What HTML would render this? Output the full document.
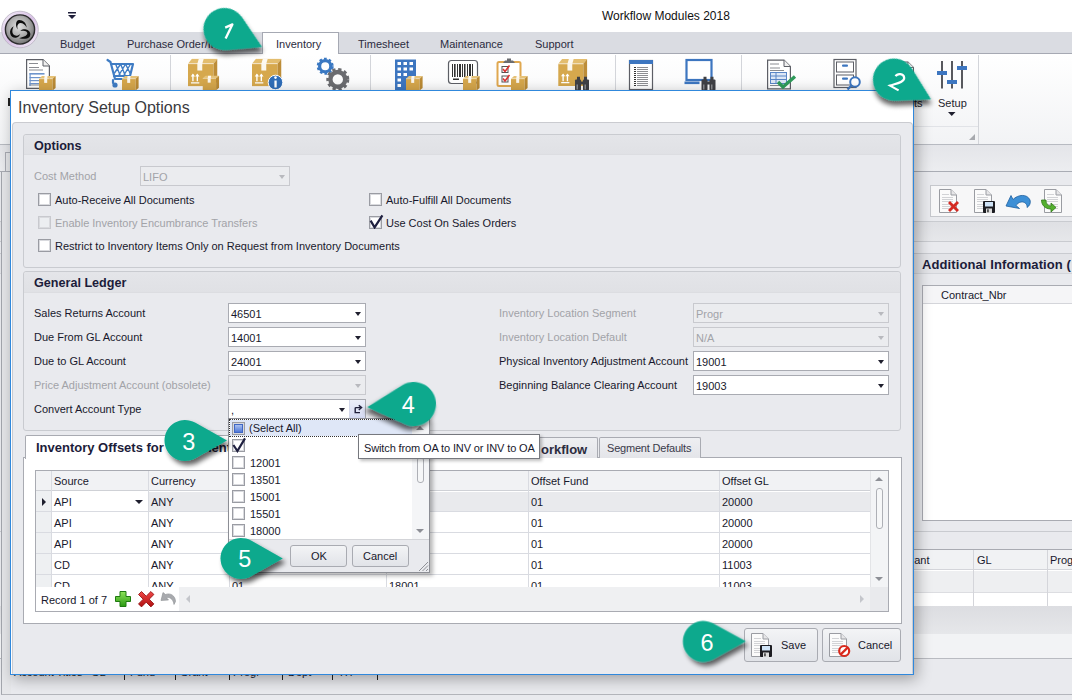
<!DOCTYPE html>
<html><head><meta charset="utf-8">
<style>
*{box-sizing:border-box;margin:0;padding:0}
html,body{width:1072px;height:700px;overflow:hidden;background:#e9eaee;font-family:"Liberation Sans",sans-serif;font-size:11px;color:#18182c}
.a{position:absolute}
.t{position:absolute;white-space:nowrap;line-height:1}
.dis{color:#a2a3a8}
.combo{position:absolute;height:20px;background:#fff;border:1px solid #a9abb2}
.combo .v{position:absolute;left:2px;top:4px;white-space:nowrap}
.combo .ar{position:absolute;right:4px;top:8px;width:0;height:0;border-left:3.5px solid transparent;border-right:3.5px solid transparent;border-top:4px solid #1f1f2e}
.combo.d{background:#ebecef;border-color:#c8c9ce}
.combo.d .v{color:#a2a3a8}
.combo.d .ar{border-top-color:#b8b9be}
.cb{position:absolute;width:13px;height:13px;border:1px solid #9a9ca3;background:#fff;box-shadow:inset 0 0 0 1px #d9dade}
.cb.d{border-color:#c8c9ce;background:#eceef1}
.grp{position:absolute;border:1px solid #c9cbd0;border-radius:3px;background:#e9eaee}
.grp .hd{position:absolute;left:0;right:0;top:0;height:20px;background:linear-gradient(#e4e5e9,#e0e1e5);border-bottom:1px solid #dcdde1;border-radius:3px 3px 0 0}
.grp .hd span{position:absolute;left:10px;top:4px;font-weight:bold;font-size:12.6px;color:#1c1c3a}
.btn{position:absolute;border:1px solid #a9abb2;border-radius:3px;background:linear-gradient(#f3f4f6,#e1e3e8)}
.g td{border-right:1px solid #d9dadd;border-bottom:1px solid #d9dadd}
</style></head><body>

<!-- ===== title bar ===== -->
<div class="a" style="left:0;top:0;width:1072px;height:32px;background:#fff"></div>
<div class="t" style="left:602px;top:10px;font-size:12px;color:#111">Workflow Modules 2018</div>

<!-- ===== tabs ===== -->
<div class="a" style="left:0;top:32px;width:1072px;height:22px;background:#dadce2;border-bottom:1px solid #a6a9b3"></div>
<div class="a" style="left:262px;top:32px;width:77px;height:23px;background:#fff;border:1px solid #a6a9b3;border-bottom:none"></div>
<div class="t" style="left:60px;top:39px;color:#2b2b40">Budget</div>
<div class="t" style="left:127px;top:39px;color:#2b2b40">Purchase Order/Inv</div>
<div class="t" style="left:276px;top:39px;color:#2b2b40">Inventory</div>
<div class="t" style="left:358px;top:39px;color:#2b2b40">Timesheet</div>
<div class="t" style="left:440px;top:39px;color:#2b2b40">Maintenance</div>
<div class="t" style="left:535px;top:39px;color:#2b2b40">Support</div>

<!-- ===== ribbon ===== -->
<div class="a" style="left:0;top:54px;width:1072px;height:91px;background:linear-gradient(#ffffff,#f2f3f5);border-bottom:1px solid #b7bac1"></div>



<!-- right app panel -->
<div class="a" style="left:0;top:145px;width:1072px;height:27px;background:linear-gradient(#e4e5e9,#ecedf0);border-bottom:1px solid #a9acb4"></div>
<div class="a" style="left:930px;top:185px;width:150px;height:32px;background:#f7f7f8;border:1px solid #c6c8cd"></div>
<div class="a" style="left:0;top:221px;width:1072px;height:21px;background:linear-gradient(#dfe0e4,#e6e7ea);border-top:1px solid #c9cbd0;border-bottom:1px solid #c9cbd0"></div>
<div class="a" style="left:0;top:253px;width:1072px;height:21px;background:#e3e4e8;border-top:1px solid #c9cbd0;border-bottom:1px solid #d3d5da"></div>
<div class="t" style="left:922px;top:258px;font-weight:bold;font-size:13px;letter-spacing:.1px;color:#1c1c3a">Additional Information (</div>
<div class="a" style="left:922px;top:285px;width:160px;height:236px;background:#fff;border:1px solid #a9abb2"></div>
<div class="a" style="left:923px;top:286px;width:160px;height:18px;background:#f5f5f7;border-bottom:1px solid #d4d5da"></div>
<div class="t" style="left:941px;top:290px">Contract_Nbr</div>
<div class="a" style="left:0;top:531px;width:1072px;height:1px;background:#c9cbd0"></div>
<div class="a" style="left:912px;top:549px;width:170px;height:58px;background:#fff;border-top:1px solid #a9abb2;border-bottom:1px solid #cfd1d6"></div>
<div class="a" style="left:912px;top:550px;width:170px;height:20px;background:#f1f2f4;border-bottom:1px solid #d4d5da"></div>
<div class="a" style="left:912px;top:571px;width:170px;height:22px;background:#eeeff1;border-bottom:1px solid #dcdde1"></div>
<div class="a" style="left:973px;top:550px;width:1px;height:56px;background:#d4d5da"></div>
<div class="a" style="left:1047px;top:550px;width:1px;height:56px;background:#d4d5da"></div>
<div class="t" style="left:902px;top:555px">Grant</div>
<div class="t" style="left:977px;top:555px">GL</div>
<div class="t" style="left:1050px;top:555px">Progr</div>
<div class="a" style="left:0;top:606px;width:1072px;height:28px;background:linear-gradient(#dcdde1,#e6e7ea)"></div>
<div class="a" style="left:0;top:634px;width:1072px;height:25px;background:#f2f3f5;border-bottom:1px solid #b9bbc1"></div>
<div class="a" style="left:1px;top:694px;width:1072px;height:1px;background:#b3b5bb"></div>
<div class="t" style="left:14px;top:667px;color:#222">Account Titles</div><div class="t" style="left:91px;top:667px;color:#222">GL</div>
<div class="a" style="left:124px;top:666px;width:1px;height:14px;background:#222"></div><div class="t" style="left:130px;top:667px">Fund</div>
<div class="a" style="left:175px;top:666px;width:1px;height:14px;background:#222"></div><div class="t" style="left:180px;top:667px">Grant</div>
<div class="a" style="left:229px;top:666px;width:1px;height:14px;background:#222"></div><div class="t" style="left:233px;top:667px">Progr</div>
<div class="a" style="left:282px;top:666px;width:1px;height:14px;background:#222"></div><div class="t" style="left:288px;top:667px">Dept</div>
<div class="a" style="left:332px;top:666px;width:1px;height:14px;background:#222"></div><div class="t" style="left:338px;top:667px">TIT</div>
<div class="a" style="left:377px;top:666px;width:1px;height:14px;background:#222"></div>
<div class="a" style="left:5px;top:152px;width:6px;height:20px;background:#e6e7ea;border:1px solid #a9acb4;border-right:none"></div>
<div class="a" style="left:1px;top:172px;width:10px;height:523px;background:#e6e7ea;border-left:1px solid #a3a6ad;border-bottom:1px solid #b3b5bb"></div>

<!-- ribbon content -->
<svg class="a" style="left:0;top:0" width="1072" height="150" viewBox="0 0 1072 150">
<defs>
<symbol id="box" viewBox="0 0 17 15">
  <polygon points="0,3.2 3,0.4 16.6,0.4 13.6,3.2" fill="#e6c277"/>
  <rect x="0" y="3.2" width="13.6" height="11.8" fill="#d5a64b"/>
  <polygon points="13.6,3.2 16.6,0.4 16.6,12.4 13.6,15" fill="#bb8b35"/>
  <polygon points="5.6,0.4 8.6,0.4 8.2,3.2 5.2,3.2" fill="#fff" opacity=".9"/>
  <rect x="5.2" y="3.2" width="3" height="4.2" fill="#fff" opacity=".9"/>
  <line x1="0" y1="3.2" x2="13.6" y2="3.2" stroke="#fff" stroke-width=".6" opacity=".7"/>
</symbol>
<symbol id="bigbox" viewBox="0 0 30 28">
  <polygon points="0,5 4,0 30,0 26,5" fill="#e3bd6e"/>
  <rect x="0" y="5" width="26" height="23" fill="#d6a84d"/>
  <polygon points="26,5 30,0 30,23 26,28" fill="#bd8d38"/>
  <polygon points="11,0 16,0 14.5,5 9.5,5" fill="#fff" opacity=".9"/>
  <rect x="9.5" y="5" width="5" height="7" fill="#fff" opacity=".9"/>
  <line x1="0" y1="5" x2="26" y2="5" stroke="#fff" stroke-width=".8" opacity=".8"/>
  <g stroke="#fff" stroke-width="1.4" fill="none"><line x1="5" y1="16" x2="5" y2="23"/><line x1="9.5" y1="16" x2="9.5" y2="23"/><line x1="3" y1="24.5" x2="11.5" y2="24.5"/></g>
  <g fill="#fff"><polygon points="2.8,18 5,15 7.2,18"/><polygon points="7.3,18 9.5,15 11.7,18"/></g>
</symbol>
<symbol id="doc" viewBox="0 0 24 30">
  <path d="M0.6,0.6 H17 L23.4,7 V29.4 H0.6 Z" fill="#fff" stroke="#5d5f66" stroke-width="1.2"/>
  <path d="M17,0.6 V7 H23.4" fill="#f0f0f0" stroke="#5d5f66" stroke-width="1"/>
  <g stroke="#8a8c92" stroke-width="1"><line x1="3" y1="4.5" x2="12" y2="4.5"/><line x1="3" y1="8.5" x2="13" y2="8.5"/><line x1="3" y1="11" x2="17" y2="11"/><line x1="3" y1="26" x2="17" y2="26"/></g>
</symbol>
<symbol id="binoc" viewBox="0 0 16 14">
  <g fill="#3f4045"><rect x="3" y="0" width="3" height="4"/><rect x="10" y="0" width="3" height="4"/><rect x="1" y="3" width="6" height="11" rx="1"/><rect x="9" y="3" width="6" height="11" rx="1"/><rect x="6" y="5" width="4" height="3"/></g>
  <g fill="#8a8b90"><rect x="2.5" y="8" width="1.5" height="5"/><rect x="10.5" y="8" width="1.5" height="5"/></g>
</symbol>
</defs>
<!-- separators -->
<g fill="#d3d5da"><rect x="170" y="55" width="1" height="89"/><rect x="370" y="55" width="1" height="89"/><rect x="615" y="55" width="1" height="89"/><rect x="741" y="55" width="1" height="89"/><rect x="978" y="55" width="1" height="89"/></g>
<rect x="913" y="126" width="65" height="1" fill="#e1e3e7"/>
<polygon points="969,140 975,140 975,134" fill="#a7a9ae"/>
<!-- icon 1 doc+box -->
<use href="#doc" x="26" y="59" width="24" height="30"/>
<g fill="#6f95cc"><rect x="29.5" y="73" width="15" height="1.6"/><rect x="29.5" y="77" width="13" height="1.2"/><rect x="29.5" y="80" width="13" height="1.2"/><rect x="29.5" y="83" width="13" height="1.2"/><rect x="29.5" y="73" width="1.2" height="13"/></g>
<use href="#box" x="39" y="75.5" width="17" height="15"/>
<!-- icon 2 cart -->
<g fill="none" stroke="#3f7cc4" stroke-width="2.2" stroke-linecap="round" stroke-linejoin="round">
  <path d="M107.5,60 L110.5,62 L115,79 L129,79"/>
  <path d="M111,64 L133,64 L130,76 L114,76"/>
  <path d="M116,65 L120,75 M121,65 L125,75 M126,65 L130,73 M130,65 L124,75 M125,65 L119,75 M120,65 L114.5,73" stroke-width="1.4"/>
  <path d="M113,80 L113,83"/>
</g>
<circle cx="115" cy="85" r="2.6" fill="#3f7cc4"/>
<use href="#box" x="122" y="75.5" width="17" height="15"/>
<!-- icon 3 boxes -->
<use href="#bigbox" x="188" y="58.5" width="29.5" height="28"/>
<use href="#box" x="202.5" y="75" width="17" height="15.5"/>
<!-- icon 4 box info -->
<use href="#bigbox" x="252" y="58.5" width="29.5" height="28"/>
<circle cx="275.5" cy="82.5" r="7.3" fill="#2f6db8" stroke="#fff" stroke-width="1"/>
<rect x="274.4" y="80.5" width="2.3" height="7" fill="#fff"/><circle cx="275.5" cy="77.6" r="1.3" fill="#fff"/>
<!-- icon 5 gears -->
<g>
  <circle cx="325.2" cy="66.2" r="5.6" fill="none" stroke="#3a78c2" stroke-width="3.2"/>
  <circle cx="325.2" cy="66.2" r="7.2" fill="none" stroke="#3a78c2" stroke-width="2.6" stroke-dasharray="2.6 2.05"/>
  <circle cx="337.8" cy="79.4" r="7.4" fill="none" stroke="#6b6c70" stroke-width="4.4"/>
  <circle cx="337.8" cy="79.4" r="10" fill="none" stroke="#6b6c70" stroke-width="3" stroke-dasharray="3.2 2.7"/>
</g>
<!-- icon 6 building -->
<rect x="395" y="59.5" width="21" height="31" fill="#3d76c0"/>
<g fill="#fff"><rect x="397.5" y="62" width="3.5" height="3"/><rect x="403.5" y="62" width="3.5" height="3"/><rect x="409.5" y="62" width="3.5" height="3"/><rect x="397.5" y="67.5" width="3.5" height="3"/><rect x="403.5" y="67.5" width="3.5" height="3"/><rect x="409.5" y="67.5" width="3.5" height="3"/><rect x="397.5" y="73" width="3.5" height="3"/><rect x="403.5" y="73" width="3.5" height="3"/><rect x="397.5" y="78.5" width="3.5" height="3"/><rect x="397.5" y="84" width="3.5" height="3"/></g>
<use href="#box" x="406" y="75.5" width="17" height="15"/>
<!-- icon 7 barcode -->
<rect x="448.5" y="60.5" width="29" height="23" rx="3" fill="#fff" stroke="#5d5f66" stroke-width="1.2"/>
<g fill="#333"><rect x="452" y="64" width="1" height="13"/><rect x="454" y="64" width="1.6" height="13"/><rect x="457" y="64" width="1" height="13"/><rect x="459" y="64" width="2" height="13"/><rect x="462" y="64" width="1" height="13"/><rect x="464" y="64" width="1.5" height="13"/><rect x="467" y="64" width="1" height="13"/><rect x="469" y="64" width="2" height="13"/><rect x="472" y="64" width="1" height="13"/><rect x="453" y="78.5" width="6" height="1.5"/></g>
<use href="#box" x="463" y="75.5" width="17" height="15"/>
<!-- icon 8 clipboard -->
<rect x="497.5" y="62" width="23" height="24" rx="1.5" fill="#fff" stroke="#e0a850" stroke-width="2"/>
<path d="M503,63 L505,60.5 L513,60.5 L515,63 Z" fill="#6b6c70"/><rect x="507" y="58.5" width="4" height="3" fill="#6b6c70"/>
<rect x="502" y="66.5" width="6" height="6" fill="#fff" stroke="#555" stroke-width="1"/><path d="M503,69 L505,71.5 L509.5,65.5" fill="none" stroke="#d33" stroke-width="1.6"/>
<rect x="502" y="76" width="6" height="6" fill="#fff" stroke="#555" stroke-width="1"/><path d="M503,78.5 L505,81 L509.5,75" fill="none" stroke="#d33" stroke-width="1.6"/>
<use href="#box" x="511" y="75.5" width="17" height="15"/>
<!-- icon 9 box binoculars -->
<use href="#bigbox" x="558" y="59" width="29.5" height="27"/>
<use href="#binoc" x="574" y="76.5" width="16" height="14"/>
<!-- icon 10 list doc -->
<rect x="629.5" y="60.5" width="23" height="29" fill="#fff" stroke="#5d5f66" stroke-width="1.2"/>
<rect x="629" y="60" width="24" height="4" fill="#3d76c0"/>
<g><rect x="634" y="67" width="2" height="1" fill="#333"/><rect x="637" y="67" width="11" height="1" fill="#8d8e92"/><rect x="634" y="69" width="2" height="1" fill="#333"/><rect x="637" y="69" width="11" height="1" fill="#8d8e92"/><rect x="634" y="71" width="2" height="1" fill="#333"/><rect x="637" y="71" width="11" height="1" fill="#8d8e92"/><rect x="634" y="73" width="2" height="1" fill="#333"/><rect x="637" y="73" width="11" height="1" fill="#8d8e92"/><rect x="634" y="75" width="2" height="1" fill="#333"/><rect x="637" y="75" width="11" height="1" fill="#8d8e92"/><rect x="634" y="77" width="2" height="1" fill="#333"/><rect x="637" y="77" width="11" height="1" fill="#8d8e92"/><rect x="634" y="79" width="2" height="1" fill="#333"/><rect x="637" y="79" width="11" height="1" fill="#8d8e92"/><rect x="634" y="81" width="2" height="1" fill="#333"/><rect x="637" y="81" width="11" height="1" fill="#8d8e92"/><rect x="634" y="83" width="2" height="1" fill="#333"/><rect x="637" y="83" width="11" height="1" fill="#8d8e92"/><rect x="634" y="85" width="2" height="1" fill="#333"/><rect x="637" y="85" width="11" height="1" fill="#8d8e92"/></g>
<!-- icon 11 monitor -->
<rect x="686.5" y="60" width="25" height="20" fill="#fff" stroke="#3d76c0" stroke-width="2.2"/>
<rect x="684.5" y="81.5" width="15" height="2.6" fill="#3d76c0"/>
<use href="#binoc" x="700.5" y="76.5" width="16" height="14"/>
<!-- icon 12 doc check -->
<use href="#doc" x="767" y="59" width="24" height="31"/>
<g fill="none" stroke="#5b86c6" stroke-width="1"><rect x="770.5" y="72.5" width="16" height="11" fill="#dde7f5"/><line x1="770.5" y1="76" x2="786.5" y2="76"/><line x1="770.5" y1="79.5" x2="786.5" y2="79.5"/><line x1="776" y1="72.5" x2="776" y2="83.5"/></g>
<path d="M778,82 L783,87 L795,76.5" fill="none" stroke="#2e9a5a" stroke-width="3.4"/>
<!-- icon 13 cabinet -->
<rect x="834" y="59.5" width="22" height="28" fill="#fff" stroke="#5d5f66" stroke-width="1.2"/>
<rect x="836.5" y="62" width="17" height="10" fill="#fff" stroke="#5d5f66" stroke-width="1"/>
<rect x="836.5" y="75" width="17" height="10" fill="#fff" stroke="#5d5f66" stroke-width="1"/>
<rect x="842" y="64.5" width="6" height="2.2" rx="1" fill="#3d76c0"/><rect x="842" y="77.5" width="6" height="2.2" rx="1" fill="#3d76c0"/>
<circle cx="855" cy="82" r="4.8" fill="#fff" stroke="#3d76c0" stroke-width="2"/><line x1="851.5" y1="85.5" x2="847.5" y2="89.5" stroke="#3d76c0" stroke-width="2.4"/>
<!-- icon 14 doc partly hidden -->
<use href="#doc" x="893" y="59" width="21" height="31"/>
<!-- icon 15 setup -->
<g fill="#58595e"><rect x="941" y="61" width="2" height="27.5"/><rect x="951" y="61" width="2" height="27.5"/><rect x="961" y="61" width="2" height="27.5"/></g>
<g fill="#3d76c0"><rect x="937" y="71" width="10" height="4"/><rect x="947" y="80" width="10" height="4"/><rect x="957" y="66" width="10" height="4"/></g>
<polygon points="948,112 955.5,112 951.75,116" fill="#1f1f2e"/>
</svg>
<div class="t" style="left:938px;top:98px;font-size:11px;color:#1f1f2e">Setup</div>
<div class="t" style="left:884px;top:98px;font-size:11px;color:#1f1f2e">Reports</div>
<!-- logo -->
<svg class="a" style="left:0;top:9px" width="42" height="42" viewBox="0 0 42 42">
<defs><radialGradient id="lg" cx="45%" cy="40%" r="65%"><stop offset="0" stop-color="#e2e2e2"/><stop offset=".55" stop-color="#a9a9a9"/><stop offset="1" stop-color="#6a6a6a"/></radialGradient>
<linearGradient id="lr" x1="0" y1="0" x2="1" y2="1"><stop offset="0" stop-color="#f4eef8"/><stop offset=".5" stop-color="#d9c2e6"/><stop offset="1" stop-color="#f2ecf6"/></linearGradient></defs>
<circle cx="20" cy="20.5" r="18.3" fill="url(#lr)" stroke="#b9b2c0" stroke-width=".8"/>
<circle cx="20" cy="20.5" r="14.6" fill="url(#lg)" stroke="#2a2a2a" stroke-width="1.4"/>
<g fill="#0d0d0d">
<path d="M18,20.6 C15,17.5 15.5,11 19.2,11 C23,11 26.4,14 26.6,18.4 C25,15.4 22.5,13.8 20.2,14 C17.6,14.3 16.6,17.6 18,20.6 Z"/>
<path d="M13.6,17.3 C10.8,19 9.6,22 10.2,24.5 C10.9,27.8 13.5,29.2 16,28.8 C18,28.5 19.6,26.6 20.3,24.7 C18.8,26.4 16.8,27 15.2,26.6 C13,26 12,23.6 12.4,21 C12.7,19.5 13.1,18.3 13.6,17.3 Z"/>
<path d="M20.3,21.8 C22,20.6 24.2,20.1 26,20.5 C29,21.2 30.8,23.6 30.3,26 C29.8,28.5 27.8,29.8 25.2,29.8 C23,29.8 20.8,29.6 19.2,29.2 C21.6,28.4 25.5,27.8 27,25.6 C28,24 27,22.6 25,22 C23.5,21.6 21.8,21.6 20.3,21.8 Z"/>
</g>
</svg>
<svg class="a" style="left:66px;top:12px" width="12" height="8" viewBox="0 0 12 8"><rect x="2" y="0" width="8" height="1.5" fill="#1f1f3a"/><polygon points="2,3 10,3 6,7" fill="#1f1f3a"/></svg>

<div class="a" style="left:8px;top:98px;width:2px;height:8px;background:#222"></div>
<!-- ===== dialog ===== -->
<div class="a" id="dlg" style="left:10px;top:90px;width:904px;height:585px;border:1px solid #3088dc;background:#e9eaee;box-shadow:3px 4px 14px rgba(0,0,0,.32)">
  <div class="a" style="left:0;top:0;width:902px;height:583px;background:#fff"></div>
  <div class="a" style="left:1px;top:31px;width:901px;height:552px;background:#e9eaee;border:1px solid #cacbd0;border-bottom-color:#e9eaee;border-radius:4px 4px 0 0"></div>
  <div class="t" style="left:7px;top:9px;font-size:16px;color:#3a3a3e">Inventory Setup Options</div>
</div>


<!-- ===== dialog content (page coords) ===== -->
<div class="grp" style="left:23px;top:134px;width:878px;height:134px"><div class="hd"><span>Options</span></div></div>
<div class="t dis" style="left:34px;top:171px">Cost Method</div>
<div class="combo d" style="left:140px;top:166px;width:150px"><span class="v">LIFO</span><span class="ar"></span></div>
<div class="cb" style="left:38px;top:193px"></div><div class="t" style="left:55px;top:195px">Auto-Receive All Documents</div>
<div class="cb d" style="left:38px;top:216px"></div><div class="t dis" style="left:55px;top:218px">Enable Inventory Encumbrance Transfers</div>
<div class="cb" style="left:38px;top:239px"></div><div class="t" style="left:55px;top:241px">Restrict to Inventory Items Only on Request from Inventory Documents</div>
<div class="cb" style="left:369px;top:193px"></div><div class="t" style="left:386px;top:195px">Auto-Fulfill All Documents</div>
<div class="cb" style="left:369px;top:216px"></div><div class="t" style="left:386px;top:218px">Use Cost On Sales Orders</div>
<svg class="a" style="left:369px;top:213px" width="16" height="16" viewBox="0 0 16 16"><path d="M1.6,7.6 L5.6,14.4 L13.4,2.4" fill="none" stroke="#1f2040" stroke-width="2.2" stroke-linejoin="miter"/></svg>

<div class="grp" style="left:23px;top:271px;width:878px;height:160px"><div class="hd" style="height:21px"><span>General Ledger</span></div></div>
<div class="t" style="left:34px;top:308px">Sales Returns Account</div>
<div class="t" style="left:34px;top:332px">Due From GL Account</div>
<div class="t" style="left:34px;top:356px">Due to GL Account</div>
<div class="t dis" style="left:34px;top:380px">Price Adjustment Account (obsolete)</div>
<div class="t" style="left:34px;top:404px">Convert Account Type</div>
<div class="combo" style="left:228px;top:303px;width:138px"><span class="v">46501</span><span class="ar"></span></div>
<div class="combo" style="left:228px;top:327px;width:138px"><span class="v">14001</span><span class="ar"></span></div>
<div class="combo" style="left:228px;top:351px;width:138px"><span class="v">24001</span><span class="ar"></span></div>
<div class="combo d" style="left:228px;top:375px;width:138px"><span class="v"></span><span class="ar"></span></div>
<div class="combo" style="left:228px;top:399px;width:138px"><span class="v">,</span><span class="ar" style="right:20px"></span><div class="a" style="right:0;top:0;width:16px;height:18px;background:linear-gradient(#eceff9,#d5dbf3);border-left:1px solid #d3d8ea"><svg class="a" style="left:2px;top:3px" width="12" height="12" viewBox="0 0 12 12"><path d="M8,9.6 H3.2 V5.6 Q3.2,4.6 4.2,4.6 H8.8" fill="none" stroke="#1f1f3a" stroke-width="1.4"/><path d="M6.8,2.2 L9.6,4.6 L6.8,7" fill="none" stroke="#1f1f3a" stroke-width="1.4"/></svg></div></div>
<div class="t dis" style="left:499px;top:308px">Inventory Location Segment</div>
<div class="t dis" style="left:499px;top:332px">Inventory Location Default</div>
<div class="t" style="left:499px;top:356px">Physical Inventory Adjustment Account</div>
<div class="t" style="left:499px;top:380px">Beginning Balance Clearing Account</div>
<div class="combo d" style="left:693px;top:303px;width:196px"><span class="v">Progr</span><span class="ar"></span></div>
<div class="combo d" style="left:693px;top:327px;width:196px"><span class="v">N/A</span><span class="ar"></span></div>
<div class="combo" style="left:693px;top:351px;width:196px"><span class="v">19001</span><span class="ar"></span></div>
<div class="combo" style="left:693px;top:375px;width:196px"><span class="v">19003</span><span class="ar"></span></div>

<!-- tab control -->
<div class="a" style="left:23px;top:457px;width:879px;height:167px;background:#fff;border:1px solid #a9abb2"></div>
<div class="a" style="left:25px;top:435px;width:240px;height:24px;background:#fff;border:1px solid #a9abb2;border-bottom:none;border-radius:2px 2px 0 0"></div>
<div class="t" style="left:36px;top:441px;font-weight:bold;font-size:13px;color:#1c1c3a">Inventory Offsets for Documents</div>
<div class="a" style="left:265px;top:437px;width:333px;height:21px;background:linear-gradient(#eeeff2,#e4e5e9);border:1px solid #a9abb2;border-bottom:none;border-radius:2px 2px 0 0"></div>
<div class="t" style="left:541px;top:443px;font-weight:bold;font-size:13px;color:#2c2c3e">orkflow</div>
<div class="a" style="left:599px;top:437px;width:102px;height:21px;background:linear-gradient(#eeeff2,#e4e5e9);border:1px solid #a9abb2;border-bottom:none;border-radius:2px 2px 0 0"></div>
<div class="t" style="left:607px;top:443px;color:#3a3a4a;letter-spacing:-.2px">Segment Defaults</div>

<!-- grid -->
<div class="a" style="left:35px;top:470px;width:854px;height:142px;background:#fff;border:1px solid #a9abb2;overflow:hidden">
<div class="a" style="left:0;top:0;width:834px;height:20px;background:#f1f2f4;border-bottom:1px solid #cfd1d6"></div>
<div class="a" style="left:0;top:20px;width:15px;height:96px;background:#eef0f2"></div>
<div class="a" style="left:15px;top:21px;width:819px;height:20px;background:#e9eaed"></div><div class="a" style="left:16px;top:21px;width:96px;height:20px;background:#fff"></div>
<div class="a" style="left:0;top:40px;width:834px;height:1px;background:#d9dbe1"></div>
<div class="a" style="left:0;top:61px;width:834px;height:1px;background:#d9dbe1"></div>
<div class="a" style="left:0;top:82px;width:834px;height:1px;background:#d9dbe1"></div>
<div class="a" style="left:0;top:103px;width:834px;height:1px;background:#d9dbe1"></div>
<div class="a" style="left:0;top:19px;width:834px;height:1px;background:#cfd1d6"></div>
<div class="a" style="left:15px;top:0;width:1px;height:116px;background:#d9dbe1"></div>
<div class="a" style="left:112px;top:0;width:1px;height:116px;background:#d9dbe1"></div>
<div class="a" style="left:193px;top:0;width:1px;height:116px;background:#d9dbe1"></div>
<div class="a" style="left:350px;top:0;width:1px;height:116px;background:#d9dbe1"></div>
<div class="a" style="left:492px;top:0;width:1px;height:116px;background:#d9dbe1"></div>
<div class="a" style="left:683px;top:0;width:1px;height:116px;background:#d9dbe1"></div>
<div class="t" style="left:18px;top:5px">Source</div>
<div class="t" style="left:115px;top:5px">Currency</div>
<div class="t" style="left:495px;top:5px">Offset Fund</div>
<div class="t" style="left:686px;top:5px">Offset GL</div>
<div class="t" style="left:18px;top:26px">API</div>
<div class="t" style="left:115px;top:26px">ANY</div>
<div class="t" style="left:196px;top:26px">01</div>
<div class="t" style="left:353px;top:26px">18001</div>
<div class="t" style="left:495px;top:26px">01</div>
<div class="t" style="left:686px;top:26px">20000</div>
<div class="t" style="left:18px;top:47px">API</div>
<div class="t" style="left:115px;top:47px">ANY</div>
<div class="t" style="left:196px;top:47px">01</div>
<div class="t" style="left:353px;top:47px">18001</div>
<div class="t" style="left:495px;top:47px">01</div>
<div class="t" style="left:686px;top:47px">20000</div>
<div class="t" style="left:18px;top:68px">API</div>
<div class="t" style="left:115px;top:68px">ANY</div>
<div class="t" style="left:196px;top:68px">01</div>
<div class="t" style="left:353px;top:68px">18001</div>
<div class="t" style="left:495px;top:68px">01</div>
<div class="t" style="left:686px;top:68px">20000</div>
<div class="t" style="left:18px;top:89px">CD</div>
<div class="t" style="left:115px;top:89px">ANY</div>
<div class="t" style="left:196px;top:89px">01</div>
<div class="t" style="left:353px;top:89px">18001</div>
<div class="t" style="left:495px;top:89px">01</div>
<div class="t" style="left:686px;top:89px">11003</div>
<div class="t" style="left:18px;top:110px">CD</div>
<div class="t" style="left:115px;top:110px">ANY</div>
<div class="t" style="left:196px;top:110px">01</div>
<div class="t" style="left:353px;top:110px">18001</div>
<div class="t" style="left:495px;top:110px">01</div>
<div class="t" style="left:686px;top:110px">11003</div>
<div class="a" style="left:6px;top:27px;width:0;height:0;border-top:4px solid transparent;border-bottom:4px solid transparent;border-left:4px solid #1f1f2e"></div>
<div class="a" style="left:99px;top:29px;width:0;height:0;border-left:4px solid transparent;border-right:4px solid transparent;border-top:4px solid #1f1f2e"></div>
<div class="a" style="left:834px;top:0;width:18px;height:116px;background:#f3f4f6;border-left:1px solid #e3e4e7"></div>
<div class="a" style="left:839px;top:6px;width:0;height:0;border-left:4px solid transparent;border-right:4px solid transparent;border-bottom:4px solid #8d8f96"></div>
<div class="a" style="left:839px;top:106px;width:0;height:0;border-left:4px solid transparent;border-right:4px solid transparent;border-top:4px solid #8d8f96"></div>
<div class="a" style="left:840px;top:17px;width:7px;height:41px;background:#f6f7f8;border:1px solid #aeb0b6;border-radius:3px"></div>
<div class="a" style="left:0;top:116px;width:852px;height:24px;background:#fff"></div>
<div class="a" style="left:143px;top:116px;width:691px;height:24px;background:#eff0f2"></div>
<div class="a" style="left:834px;top:116px;width:18px;height:24px;background:#e9eaed"></div>
<div class="t" style="left:5px;top:124px">Record 1 of 7</div>
<div class="a" style="left:150px;top:124px;width:0;height:0;border-top:4px solid transparent;border-bottom:4px solid transparent;border-right:4px solid #c4c6cb"></div>
<div class="a" style="left:824px;top:124px;width:0;height:0;border-top:4px solid transparent;border-bottom:4px solid transparent;border-left:4px solid #c4c6cb"></div>
</div>

<!-- buttons -->
<div class="btn" style="left:744px;top:628px;width:74px;height:34px"></div>
<div class="t" style="left:781px;top:640px">Save</div>
<div class="btn" style="left:822px;top:628px;width:79px;height:34px"></div>
<div class="t" style="left:858px;top:640px">Cancel</div>

<!-- popup -->
<div class="a" style="left:228px;top:418px;width:202px;height:155px;background:#fff;border:1px solid #8c8e95;box-shadow:3px 3px 4px rgba(0,0,0,.28)">
  <div class="a" style="left:1px;top:1px;width:182px;height:16px;background:#dfe7f7;outline:1px dotted #333"></div>
  <div class="a" style="left:183px;top:0;width:17px;height:120px;background:#f4f5f7"></div>
  <div class="a" style="left:187px;top:7px;width:0;height:0;border-left:4px solid transparent;border-right:4px solid transparent;border-bottom:4px solid #8d8f96"></div>
  <div class="a" style="left:187px;top:110px;width:0;height:0;border-left:4px solid transparent;border-right:4px solid transparent;border-top:4px solid #8d8f96"></div>
  <div class="a" style="left:188px;top:38px;width:7px;height:26px;background:#f6f7f8;border:1px solid #aeb0b6;border-radius:3px"></div>
  <div class="a" style="left:0;top:120px;width:200px;height:33px;background:#e9eaee;border-top:1px solid #d3d4d8"></div>
  <div class="btn" style="left:61px;top:126px;width:57px;height:22px"></div>
  <div class="t" style="left:82px;top:132px">OK</div>
  <div class="btn" style="left:123px;top:126px;width:57px;height:22px"></div>
  <div class="t" style="left:134px;top:132px">Cancel</div>
</div>
<div class="cb" style="left:232px;top:422px;width:13px;height:13px"></div>
<div class="a" style="left:234px;top:424px;width:9px;height:9px;background:linear-gradient(#a9c0f0,#4f78d8);border:1px solid #3f66c4"></div>
<div class="t" style="left:249px;top:423px">(Select All)</div>
<div class="cb" style="left:232px;top:439px;width:13px;height:13px"></div>
<div class="cb" style="left:232px;top:456px;width:13px;height:13px"></div><div class="t" style="left:250px;top:458px">12001</div>
<div class="cb" style="left:232px;top:473px;width:13px;height:13px"></div><div class="t" style="left:250px;top:475px">13501</div>
<div class="cb" style="left:232px;top:490px;width:13px;height:13px"></div><div class="t" style="left:250px;top:492px">15001</div>
<div class="cb" style="left:232px;top:507px;width:13px;height:13px"></div><div class="t" style="left:250px;top:509px">15501</div>
<div class="cb" style="left:232px;top:524px;width:13px;height:13px"></div><div class="t" style="left:250px;top:526px">18000</div>

<!-- tooltip -->
<div class="a" style="left:358px;top:434px;width:182px;height:25px;background:#fff;border:1px solid #76787e;box-shadow:2px 2px 3px rgba(0,0,0,.25)"></div>
<div class="t" style="left:364px;top:443px;letter-spacing:-.12px">Switch from OA to INV or INV to OA</div>


<!-- misc icons -->
<svg class="a" style="left:0;top:0" width="1072" height="700" viewBox="0 0 1072 700">
<defs>
<linearGradient id="gg" x1="0" y1="0" x2="0" y2="1"><stop offset="0" stop-color="#8ee35a"/><stop offset="1" stop-color="#2a9a12"/></linearGradient>
<linearGradient id="rg" x1="0" y1="0" x2="0" y2="1"><stop offset="0" stop-color="#f04848"/><stop offset="1" stop-color="#b01010"/></linearGradient>
<symbol id="sdoc" viewBox="0 0 18 24">
  <path d="M0.5,0.5 H12 L17.5,6 V23.5 H0.5 Z" fill="#fbfbfb" stroke="#9a9ca2" stroke-width="1"/>
  <path d="M12,0.5 V6 H17.5" fill="#e6e6e8" stroke="#9a9ca2" stroke-width="1"/>
  <g fill="#c9cacd"><rect x="3" y="5" width="7" height="0.8"/><rect x="3" y="8" width="11" height="0.8"/><rect x="3" y="10" width="11" height="0.8"/><rect x="3" y="12" width="11" height="0.8"/><rect x="3" y="15" width="11" height="0.8"/><rect x="3" y="17" width="11" height="0.8"/><rect x="3" y="19" width="11" height="0.8"/></g>
</symbol>
<symbol id="floppy" viewBox="0 0 12 12">
  <rect x="0" y="0" width="12" height="12" rx="1" fill="#1d1d22"/>
  <rect x="2" y="1" width="8" height="4.5" fill="#cfe3f6"/>
  <rect x="3" y="7.5" width="6" height="4.5" fill="#dcdcdc"/><rect x="4.2" y="8.3" width="1.5" height="3" fill="#333"/>
</symbol>
</defs>
<!-- popup check row -->
<path d="M233.4,445 L237.4,451 L245,438.4" fill="none" stroke="#1f2040" stroke-width="2.2" />
<!-- popup grip -->
<g stroke="#8f9197" stroke-width="1"><line x1="419" y1="571" x2="428" y2="562"/><line x1="422.5" y1="571" x2="428" y2="565.5"/><line x1="426" y1="571" x2="428" y2="569"/></g>
<!-- nav icons -->
<path d="M120,591.5 H126 V596.5 H130.5 V601.5 H126 V606.5 H120 V601.5 H115.5 V596.5 H120 Z" fill="url(#gg)" stroke="#1f7a10" stroke-width="1"/>
<path d="M138.5,594.5 L141.5,591.5 L146.2,596.2 L150.9,591.5 L153.9,594.5 L149.2,599.2 L153.9,603.9 L150.9,606.9 L146.2,602.2 L141.5,606.9 L138.5,603.9 L143.2,599.2 Z" fill="url(#rg)" stroke="#8a0a0a" stroke-width="0.8"/>
<path transform="translate(336.5,0) scale(-1,1)" d="M161,601.5 C161,596 166,592.5 171,594.5 L173.5,592.5 L175.5,600.5 L168,600 L170,597.8 C167,596.8 163.5,598.5 162.5,604.5 Z" fill="#a8aaae" stroke="#8c8e92" stroke-width=".6"/>
<!-- save / cancel icons -->
<use href="#sdoc" x="751" y="633" width="18" height="24"/>
<use href="#floppy" x="760" y="645" width="12" height="12"/>
<use href="#sdoc" x="829" y="633" width="18" height="24"/>
<circle cx="844.2" cy="651" r="5" fill="#fff" stroke="#d9291c" stroke-width="2.2"/><line x1="840.8" y1="654.4" x2="847.6" y2="647.6" stroke="#d9291c" stroke-width="2.2"/>
<!-- right toolbar icons -->
<use href="#sdoc" x="939" y="189" width="18" height="24"/>
<path d="M948,203 L950,201 L953.5,204.5 L957,201 L959,203 L955.5,206.5 L959,210 L957,212 L953.5,208.5 L950,212 L948,210 L951.5,206.5 Z" fill="#d42a22"/>
<use href="#sdoc" x="974" y="189" width="18" height="24"/>
<use href="#floppy" x="983" y="201" width="12" height="12"/>
<path d="M1006,206 L1011,195.5 L1013,199.5 C1018,194.5 1027,193.5 1030,200 C1031,203 1029.5,206 1027,207.5 C1027.5,204.5 1025,201.5 1021,202 C1018.5,202.5 1017,204 1016,205.5 L1019.5,208.5 Z" fill="#3d8fd6" stroke="#1f5f9e" stroke-width=".8"/>
<use href="#sdoc" x="1044" y="189" width="18" height="24"/>
<path d="M1041.5,200 L1046,200 C1046,204 1048,206 1051,206 L1051,203 L1056,207.5 L1051,212 L1051,209 C1045,209 1041.5,205 1041.5,200 Z" fill="#55b030" stroke="#2e7a18" stroke-width=".8"/>
</svg>

<!-- callouts -->
<svg class="a" style="left:0;top:0" width="1072" height="700" viewBox="0 0 1072 700"><defs><filter id="sh" x="-50%" y="-50%" width="200%" height="200%"><feGaussianBlur in="SourceAlpha" stdDeviation="2.6"/><feOffset dx="2.5" dy="3.5" result="b"/><feComponentTransfer><feFuncA type="linear" slope="0.62"/></feComponentTransfer><feMerge><feMergeNode/><feMergeNode in="SourceGraphic"/></feMerge></filter></defs>
<path transform="translate(224.5,29.0) rotate(25.64)" d="M41.60,0 L10.60,-18.13 A21,21 0 1 0 10.60,18.13 Z" fill="#0aa98d" filter="url(#sh)"/>
<path d="M225.2,27.6 L232.4,24.4 L225.6,38.6" stroke="#fff" stroke-width="2.3" fill="none" stroke-linejoin="round"/>
<path transform="translate(894.0,79.6) rotate(28.03)" d="M41.92,0 L10.52,-18.17 A21,21 0 1 0 10.52,18.17 Z" fill="#0aa98d" filter="url(#sh)"/>
<path d="M895.6,76.2 C897.2,73.2 903.8,73 904.2,77.8 C904.5,82.2 896,83.6 890,85.6 L898.6,90.4" stroke="#fff" stroke-width="2.2" fill="none" stroke-linejoin="miter"/>
<path transform="translate(185.0,440.5) rotate(0.00)" d="M42.00,0 L10.01,-17.89 A20.5,20.5 0 1 0 10.01,17.89 Z" fill="#0aa98d" filter="url(#sh)"/>
<text transform="translate(185.0,440.5) rotate(0.00)" x="3.7" y="9" text-anchor="middle" font-family="Liberation Sans" font-size="23.5" fill="#fff">3</text>
<path transform="translate(414.0,404.0) scale(-1,1) rotate(3.92)" d="M46.81,0 L10.34,-19.42 A22,22 0 1 0 10.34,19.42 Z" fill="#0aa98d" filter="url(#sh)"/>
<text transform="translate(414.0,404.0)" x="-5.8" y="9" text-anchor="middle" font-family="Liberation Sans" font-size="23.5" fill="#fff">4</text>
<path transform="translate(241.0,558.4) rotate(0.00)" d="M41.80,0 L10.05,-17.87 A20.5,20.5 0 1 0 10.05,17.87 Z" fill="#0aa98d" filter="url(#sh)"/>
<text transform="translate(241.0,558.4) rotate(0.00)" x="3.7" y="9" text-anchor="middle" font-family="Liberation Sans" font-size="23.5" fill="#fff">5</text>
<path transform="translate(703.3,641.4) rotate(-0.13)" d="M42.50,0 L9.79,-17.90 A20.4,20.4 0 1 0 9.79,17.90 Z" fill="#0aa98d" filter="url(#sh)"/>
<text transform="translate(703.3,641.4) rotate(-0.13)" x="3.7" y="9" text-anchor="middle" font-family="Liberation Sans" font-size="23.5" fill="#fff">6</text>
</svg>
</body></html>
